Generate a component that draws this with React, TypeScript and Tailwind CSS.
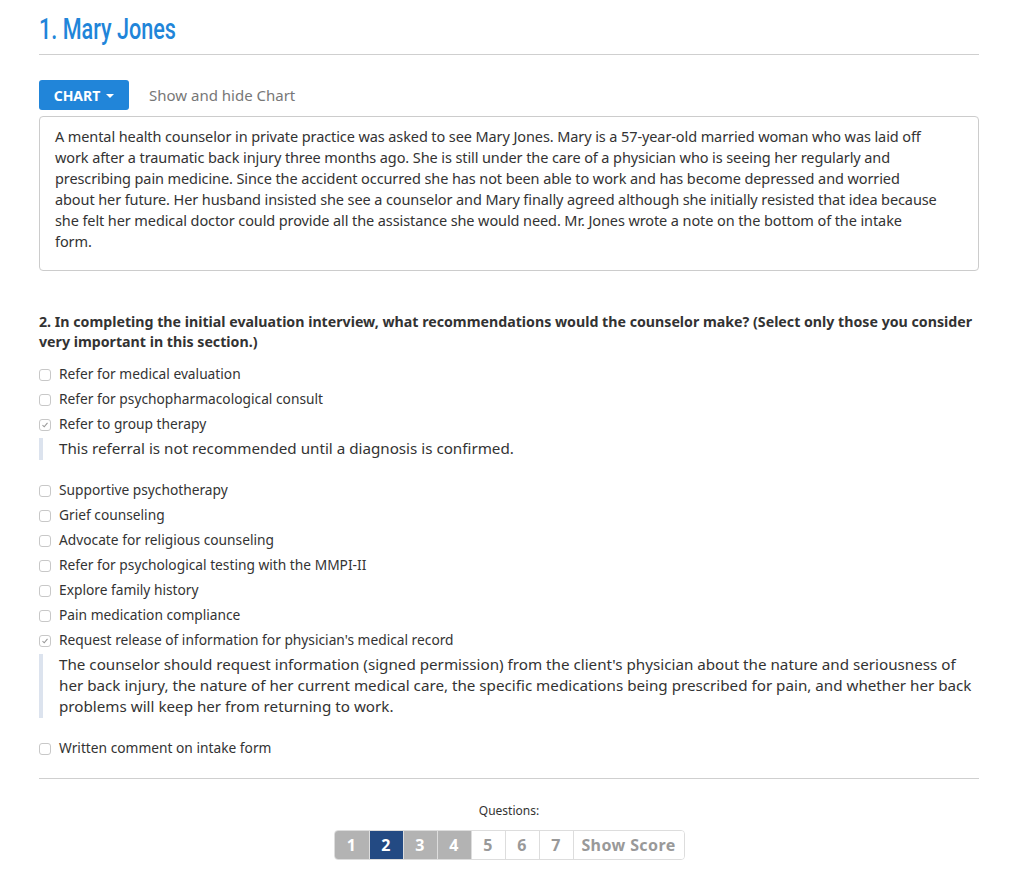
import { useState } from "react";

const body = { fontFamily: '"Noto Sans", "Open Sans", sans-serif' };

type Item = { label: string; checked?: boolean; feedback?: string };

const items: Item[] = [
  { label: "Refer for medical evaluation" },
  { label: "Refer for psychopharmacological consult" },
  {
    label: "Refer to group therapy",
    checked: true,
    feedback: "This referral is not recommended until a diagnosis is confirmed.",
  },
  { label: "Supportive psychotherapy" },
  { label: "Grief counseling" },
  { label: "Advocate for religious counseling" },
  { label: "Refer for psychological testing with the MMPI-II" },
  { label: "Explore family history" },
  { label: "Pain medication compliance" },
  {
    label: "Request release of information for physician's medical record",
    checked: true,
    feedback:
      "The counselor should request information (signed permission) from the client's physician about the nature and seriousness of her back injury, the nature of her current medical care, the specific medications being prescribed for pain, and whether her back problems will keep her from returning to work.",
  },
  { label: "Written comment on intake form" },
];

const pages = [
  { label: "1", state: "done" },
  { label: "2", state: "active" },
  { label: "3", state: "done" },
  { label: "4", state: "done" },
  { label: "5", state: "open" },
  { label: "6", state: "open" },
  { label: "7", state: "open" },
  { label: "Show Score", state: "open" },
];

const Checkbox = ({ checked }: { checked?: boolean }) => (
  <span className="flex h-[12px] w-[12px] shrink-0 items-center justify-center rounded-[3px] border border-[#c8c8c8] bg-white">
    {checked && (
      <svg width="8" height="8" viewBox="0 0 8 8">
        <path d="M1.5 4.2 L3.2 5.8 L6.5 1.8" fill="none" stroke="#9a9a9a" strokeWidth="1.1" />
      </svg>
    )}
  </span>
);

export default function App() {
  const [showChart, setShowChart] = useState(false);

  return (
    <div className="min-h-[889px] bg-white text-[#333]" style={body}>
      <div className="mx-auto w-[940px] pt-[12px]">
        {/* no condensed face installed, so squeeze a regular one */}
        <h1
          className="inline-block origin-left scale-x-[0.72] text-[30px] font-medium leading-[34px] text-[#2185d9]"
          style={{ fontFamily: '"Roboto", "Liberation Sans", sans-serif' }}
        >
          1. Mary Jones
        </h1>
        <hr className="mt-[8px] border-t border-[#cfcfcf]" />

        <div className="mt-[25px] flex items-center">
          <button
            onClick={() => setShowChart(!showChart)}
            className="flex h-[30px] w-[90px] items-center justify-center gap-[6px] rounded-[3px] bg-[#2185d9] text-[14px] font-bold text-white"
          >
            CHART
            <span className="mt-[1px] h-0 w-0 border-x-[4px] border-t-[4px] border-x-transparent border-t-white" />
          </button>
          <span className="ml-[20px] text-[15px] text-[#777]">Show and hide Chart</span>
        </div>

        <div className="mt-[6px] h-[155px] rounded-[4px] border border-[#ccc] px-[15px] py-[9px] text-[14.5px] leading-[21px] tracking-[-0.1px] text-[#333]">
          A mental health counselor in private practice was asked to see Mary Jones. Mary is a 57-year-old married woman
          who was laid off
          <br />
          work after a traumatic back injury three months ago. She is still under the care of a physician who is seeing her
          regularly and
          <br />
          prescribing pain medicine. Since the accident occurred she has not been able to work and has become depressed and
          worried
          <br />
          about her future. Her husband insisted she see a counselor and Mary finally agreed although she initially resisted
          that idea because
          <br />
          she felt her medical doctor could provide all the assistance she would need. Mr. Jones wrote a note on the bottom
          of the intake
          <br />
          form.
        </div>

        <p className="mt-[41px] text-[14.2px] font-bold leading-[20px] text-[#333]">
          2. In completing the initial evaluation interview, what recommendations would the counselor make? (Select only
          those you consider very important in this section.)
        </p>

        <ul className="mt-[10px]">
          {items.map((it) => (
            <li key={it.label}>
              <label className="flex h-[25px] items-center gap-[8px] text-[13.75px] text-[#333]">
                <Checkbox checked={it.checked} />
                {it.label}
              </label>
              {it.feedback && (
                <div className="mb-[18px] mt-[1px] border-l-[4px] border-[#dce3ee] pb-[1px] pl-[16px] text-[15.2px] leading-[21px] text-[#333]">
                  {it.feedback}
                </div>
              )}
            </li>
          ))}
        </ul>

        <hr className="mt-[17px] border-t border-[#cfcfcf]" />

        <div className="mt-[23px] text-center text-[12px] text-[#333]">Questions:</div>
        <div className="mt-[10px] flex justify-center">
          <div className="flex overflow-hidden rounded-[4px] border border-[#ddd]">
            {pages.map((p, i) => (
              <button
                key={p.label}
                className={`h-[28px] text-[16px] font-bold tracking-[0.4px] ${p.label.length > 1 ? "w-[111px]" : "w-[34px]"} ${
                  i > 0 ? "border-l border-[#ddd]" : ""
                } ${
                  p.state === "active"
                    ? "bg-[#234a83] text-white"
                    : p.state === "done"
                    ? "bg-[#b3b3b3] text-white"
                    : "bg-white text-[#999]"
                }`}
              >
                {p.label}
              </button>
            ))}
          </div>
        </div>
      </div>
    </div>
  );
}
